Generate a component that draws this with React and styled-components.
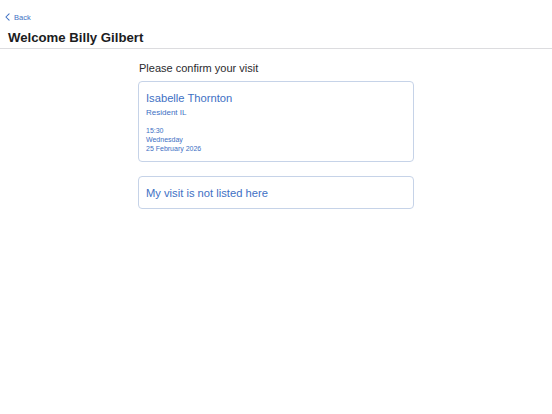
import styled, { createGlobalStyle } from "styled-components";

const GlobalStyle = createGlobalStyle`
  *, *::before, *::after {
    box-sizing: border-box;
  }
  body {
    margin: 0;
    background: #ffffff;
    font-family: "Liberation Sans", Arial, sans-serif;
    color: #1c1c1e;
  }
`;

const visit = {
  name: "Isabelle Thornton",
  role: "Resident IL",
  time: "15:30",
  day: "Wednesday",
  date: "25 February 2026",
};

export default function App() {
  return (
    <>
      <GlobalStyle />
      <Header>
        <BackLink>
          <svg width="5" height="8" viewBox="0 0 6 10" fill="none">
            <path d="M5 1L1 5l4 4" stroke="#3e70c4" strokeWidth="1.3" strokeLinecap="round" strokeLinejoin="round" />
          </svg>
          Back
        </BackLink>
        <Title>Welcome Billy Gilbert</Title>
      </Header>
      <Main>
        <Prompt>Please confirm your visit</Prompt>
        <VisitCard>
          <Name>{visit.name}</Name>
          <Role>{visit.role}</Role>
          <Details>
            <span>{visit.time}</span>
            <span>{visit.day}</span>
            <span>{visit.date}</span>
          </Details>
        </VisitCard>
        <OtherCard>My visit is not listed here</OtherCard>
      </Main>
    </>
  );
}

const Header = styled.header`
  display: flex;
  flex-direction: column;
  padding: 12px 8px 2px;
  border-bottom: 1px solid #dcdcdf;
`;

const BackLink = styled.a`
  display: flex;
  align-items: center;
  gap: 4px;
  margin-left: -3px;
  font-size: 7.5px;
  color: #3e70c4;
  height: 10px;
  cursor: pointer;
`;

const Title = styled.h1`
  margin: 7px 0 0;
  font-size: 13.2px;
  font-weight: 700;
  line-height: 17px;
  color: #1c1c1e;
`;

const Main = styled.main`
  width: 276px;
  margin: 0 auto;
  padding-top: 12px;
  display: flex;
  flex-direction: column;
`;

const Prompt = styled.h2`
  margin: 0 0 6px 1px;
  font-size: 11px;
  font-weight: 400;
  line-height: 14px;
  color: #2b2b2e;
`;

const Card = styled.div`
  border: 1px solid #c6d3e8;
  border-radius: 4px;
  padding: 0 7px;
  background: #fff;
  color: #3e70c4;
`;

const VisitCard = styled(Card)`
  height: 81px;
  padding-top: 9px;
`;

const Name = styled.div`
  font-size: 11.2px;
  line-height: 14px;
`;

const Role = styled.div`
  margin-top: 3px;
  font-size: 8px;
  line-height: 10px;
`;

const Details = styled.div`
  display: flex;
  flex-direction: column;
  margin-top: 8px;
  font-size: 7px;
  line-height: 9px;
`;

const OtherCard = styled(Card)`
  margin-top: 14px;
  height: 33px;
  display: flex;
  align-items: center;
  font-size: 11.2px;
`;
